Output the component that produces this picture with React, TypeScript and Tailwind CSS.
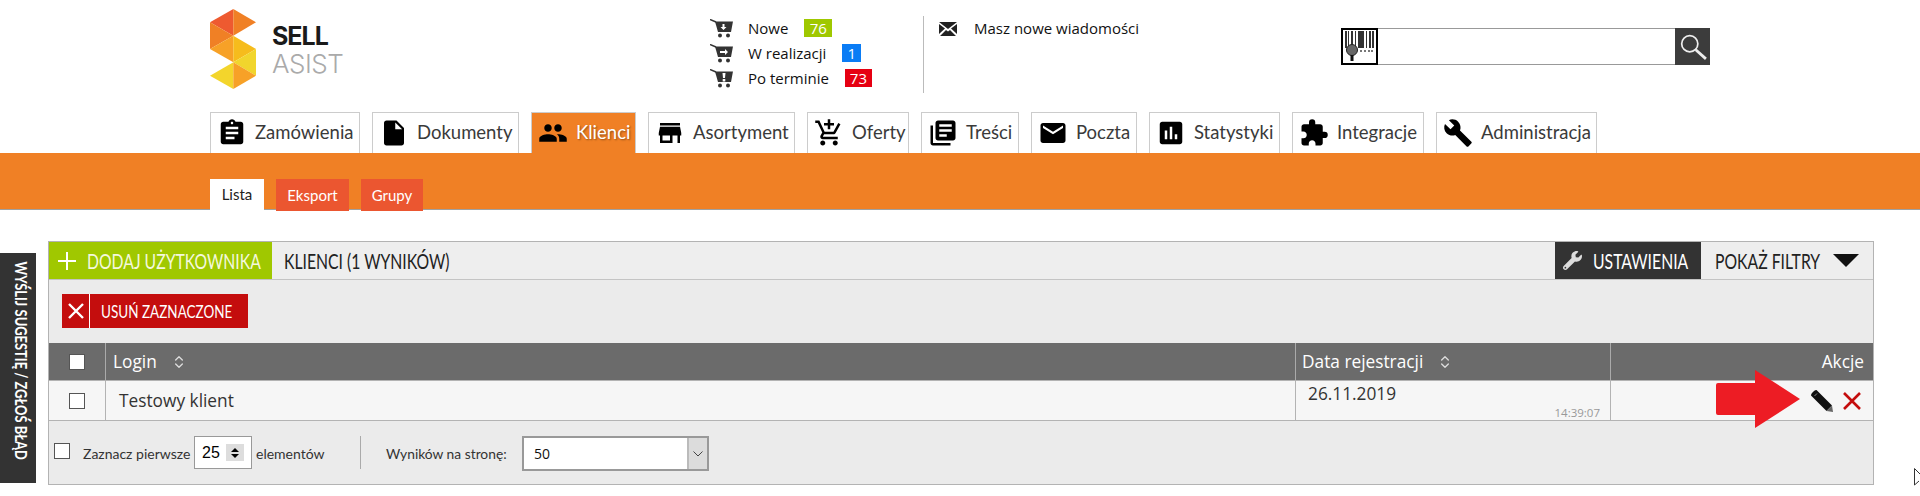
import type { ReactNode } from 'react';
import { ChevronsUpDown } from 'lucide-react';
import { FaWrench } from 'react-icons/fa';
import {
  MdAddShoppingCart,
  MdAssessment,
  MdAssignment,
  MdBuild,
  MdEmail,
  MdExtension,
  MdInsertDriveFile,
  MdLibraryBooks,
  MdPeople,
  MdStore,
} from 'react-icons/md';

const tabs = [
  { label: 'Zamówienia', icon: MdAssignment, width: 'w-[150px]' },
  { label: 'Dokumenty', icon: MdInsertDriveFile, width: 'w-[147px]' },
  { label: 'Klienci', icon: MdPeople, width: 'w-[105px]', active: true },
  { label: 'Asortyment', icon: MdStore, width: 'w-[147px]' },
  { label: 'Oferty', icon: MdAddShoppingCart, width: 'w-[102px]' },
  { label: 'Treści', icon: MdLibraryBooks, width: 'w-[98px]' },
  { label: 'Poczta', icon: MdEmail, width: 'w-[106px]' },
  { label: 'Statystyki', icon: MdAssessment, width: 'w-[131px]' },
  { label: 'Integracje', icon: MdExtension, width: 'w-[132px]' },
  { label: 'Administracja', icon: MdBuild, width: 'w-[161px]' },
];

function Logo(): JSX.Element {
  return (
    <svg width="46" height="80" viewBox="0 0 138 240" className="mt-[9px]">
      <polygon points="0,40 70,0 70,80" fill="#ee5a30" />
      <polygon points="70,0 138,40 70,80" fill="#f08025" />
      <polygon points="0,40 70,80 0,120" fill="#f08025" />
      <polygon points="0,120 70,80 70,160" fill="#f7a127" />
      <polygon points="70,80 138,120 70,160" fill="#f6bc1c" />
      <polygon points="138,120 138,200 70,160" fill="#f1d52d" />
      <polygon points="0,200 70,160 70,240" fill="#f3d52c" />
      <polygon points="70,160 138,200 70,240" fill="#f7a127" />
    </svg>
  );
}

function Cart({ children }: { children: ReactNode }): JSX.Element {
  return (
    <svg width="23" height="19" viewBox="0 0 23 19" className="shrink-0">
      <path d="M0 0.5 L6 3" stroke="#333" strokeWidth="1.5" />
      <path d="M5 2.5 H23 L21 13 H8 Z" fill="#333" />
      <circle cx="10" cy="16.5" r="2" fill="#333" />
      <circle cx="18" cy="16.5" r="2" fill="#333" />
      {children}
    </svg>
  );
}

function Checkbox(): JSX.Element {
  return <div className="h-4 w-4 border border-[#555] bg-white" />;
}

function Sort(): JSX.Element {
  return <ChevronsUpDown size={16} strokeWidth={2} className="text-[#ddd]" />;
}

// Stands in for the condensed webfont of the original
function Narrow({ className, children }: { className: string; children: ReactNode }): JSX.Element {
  return (
    <div className={`shrink-0 whitespace-nowrap ${className}`}>
      <span className="inline-block origin-left scale-x-[0.75]">{children}</span>
    </div>
  );
}

export default function App(): JSX.Element {
  return (
    <div className="relative h-[496px] w-[1920px] overflow-hidden bg-white font-['Open_Sans',sans-serif]">
      {/* header */}
      <div className="flex h-[112px] pl-[210px]">
        <div className="flex w-[500px] items-start">
          <Logo />
          <div className="ml-4 mt-[22px] flex flex-col font-['Inter',sans-serif] leading-[28px]">
            <span className="text-[25px] font-bold tracking-[-1px] text-[#1a1a1a]">SELL</span>
            <span className="text-[26px] font-light tracking-[-0.5px] text-[#aaa]">ASIST</span>
          </div>
        </div>

        <div className="w-[213px] pt-[19px] text-[15px] text-[#111]">
          <div className="flex h-[25px] items-start">
            <Cart>
              <path d="M12.5 5 h2 v3 h2 l-3 3 l-3 -3 h2 Z" fill="#fff" />
            </Cart>
            <span className="ml-[15px] leading-[18px]">Nowe</span>
            <span className="ml-4 flex h-[18px] w-[28px] items-center justify-center bg-[#9fc800] text-white">76</span>
          </div>
          <div className="flex h-[25px] items-start">
            <Cart>
              <path d="M10 7 h5 v-2 l3 3 l-3 3 v-2 h-5 Z" fill="#fff" />
            </Cart>
            <span className="ml-[15px] leading-[18px]">W realizacji</span>
            <span className="ml-4 flex h-[18px] w-[19px] items-center justify-center bg-[#0a7cf5] text-white">1</span>
          </div>
          <div className="flex h-[25px] items-start">
            <Cart>
              <path d="M12.5 4 h3 l-0.5 5 h-2 Z M12.7 10 h2.6 v2.4 h-2.6 Z" fill="#fff" />
            </Cart>
            <span className="ml-[15px] leading-[18px]">Po terminie</span>
            <span className="ml-4 flex h-[18px] w-[27px] items-center justify-center bg-[#e60012] text-white">73</span>
          </div>
        </div>

        <div className="mt-4 flex h-[77px] w-[418px] items-start border-l border-[#bbb] pl-[15px] text-[15px] text-[#111]">
          <svg width="18" height="14" viewBox="0 0 18 14" className="mt-[6px]">
            <path d="M0 0 H18 L9 7 Z M0 2 V12 L6 6.5 Z M18 2 V12 L12 6.5 Z M1 14 L7 8 L9 9.5 L11 8 L17 14 Z" fill="#222" />
          </svg>
          <span className="ml-[17px] mt-[3px] leading-[18px]">Masz nowe wiadomości</span>
        </div>

        <div className="mt-[28px] flex h-[37px] w-[369px]">
          <div className="flex h-[37px] w-[37px] border-2 border-black bg-white p-[1px]">
            <svg width="31" height="31" viewBox="0 0 31 31">
              <path d="M1 0h2v22H1z M4 0h1v22H4z M7 0h2v22H7z M11 0h1v22h-1z M14 0h6v17h-6z M22 0h1v22h-1z M25 0h2v22h-2z M28 0h2v22h-2z" fill="#333" />
              <rect x="0" y="17" width="31" height="6" fill="#fff" />
              <circle cx="8" cy="19" r="5.5" fill="#666" stroke="#222" />
              <rect x="6.5" y="24" width="3" height="6" fill="#111" />
              <path d="M16 19h2v2h-2z M20 19h2v2h-2z M24 19h2v2h-2z M27 19h2v2h-2z" fill="#777" />
            </svg>
          </div>
          <div className="h-[37px] w-[298px] border-y border-[#999] bg-white" />
          <div className="flex h-[37px] w-[35px] items-center justify-center bg-[#3c3c3c]">
            <svg width="28" height="28" viewBox="0 0 26 26" fill="none" stroke="#eee">
              <circle cx="10" cy="10" r="7.5" strokeWidth="1.6" />
              <path d="M15.5 15.5 L25 24" strokeWidth="2.6" />
            </svg>
          </div>
        </div>
      </div>

      {/* main tabs */}
      <div className="flex h-[41px] gap-3 pl-[210px] font-['Lato',sans-serif] text-[18.5px]">
        {tabs.map(({ label, icon: Icon, width, active }) => (
          <div
            key={label}
            className={`flex items-center gap-2 border border-b-0 border-[#ccc] pl-[6px] ${width} ${
              active ? 'bg-[#f08025] text-white [text-shadow:1px_1px_2px_rgba(0,0,0,0.4)]' : 'bg-white text-[#3a3a3a]'
            }`}
          >
            <Icon size={30} className="shrink-0 text-black" />
            <span className="whitespace-nowrap">{label}</span>
          </div>
        ))}
      </div>

      {/* orange bar with sub tabs */}
      <div className="flex h-[57px] gap-3 border-b border-[#a0a0a0] bg-[#f08025] pl-[210px] pt-[26px] font-['Lato',sans-serif] text-[15px]">
        <div className="flex h-[31px] w-[54px] items-center justify-center bg-white text-[#222]">Lista</div>
        <div className="flex h-[32px] w-[73px] items-center justify-center bg-[#eb5630] text-white">Eksport</div>
        <div className="flex h-[32px] w-[62px] items-center justify-center bg-[#eb5630] text-white">Grupy</div>
      </div>

      {/* panel */}
      <div className="ml-[48px] mt-[31px] w-[1826px] border border-[#b3b3b3] bg-[#ebebeb]">
        <div className="flex h-[38px] items-stretch border-b border-[#c4c4c4] bg-[#eee] font-['Lato',sans-serif] text-[21px] uppercase">
          <div className="flex w-[223px] shrink-0 items-center bg-[#a0c800] pl-[9px] text-[#f4f8dc]">
            <svg width="18" height="18" viewBox="0 0 18 18" className="mr-[11px] shrink-0">
              <path d="M8 0h2v8h8v2h-8v8H8v-8H0V8h8z" fill="#fff" />
            </svg>
            <Narrow className="w-[173px]">Dodaj użytkownika</Narrow>
          </div>
          <div className="ml-3 flex items-center text-[#222]">
            <Narrow className="w-[163px]">Klienci (1 wyników)</Narrow>
          </div>
          <div className="ml-auto flex w-[146px] shrink-0 items-center bg-[#333] pl-2 text-white">
            <FaWrench size={19} className="mr-[11px] shrink-0 text-[#ddd]" />
            <Narrow className="w-[96px]">Ustawienia</Narrow>
          </div>
          <div className="flex w-[172px] shrink-0 items-center pl-[14px] text-[#222]">
            <Narrow className="w-[108px]">Pokaż filtry</Narrow>
            <svg width="26" height="13" viewBox="0 0 26 13" className="ml-[10px] shrink-0">
              <path d="M0 0H26L13 13Z" fill="#111" />
            </svg>
          </div>
        </div>

        <div className="flex h-[63px] items-start pl-[13px] pt-[14px]">
          <div className="flex h-[34px] w-[186px] items-stretch bg-[#c40d0d] font-['Lato',sans-serif] text-[18px] text-white">
            <div className="flex w-[28px] items-center justify-center border-r border-white">
              <svg width="16" height="16" viewBox="0 0 16 16" stroke="#fff" strokeWidth="2.4">
                <path d="M1 1L15 15M15 1L1 15" />
              </svg>
            </div>
            <div className="flex items-center pl-[11px]">
              <Narrow className="w-[134px]">USUŃ ZAZNACZONE</Narrow>
            </div>
          </div>
        </div>

        <div className="flex h-[38px] border-b border-[#b3b3b3] bg-[#6b6b6b] text-[17.3px] text-white">
          <div className="flex w-[57px] items-center justify-center border-r border-[#aaa]">
            <Checkbox />
          </div>
          <div className="flex w-[1189px] items-center gap-[14px] pl-[7px]">
            Login <Sort />
          </div>
          <div className="flex w-[316px] items-center gap-[14px] border-x border-[#aaa] pl-[6px]">
            Data rejestracji <Sort />
          </div>
          <div className="flex flex-1 items-center justify-end pr-[9px]">Akcje</div>
        </div>

        <div className="flex h-[40px] border-b border-[#b3b3b3] bg-[#f6f6f6] text-[17.3px] text-[#333]">
          <div className="flex w-[57px] items-center justify-center border-r border-[#b3b3b3]">
            <Checkbox />
          </div>
          <div className="flex w-[1189px] items-center pl-[13px]">Testowy klient</div>
          <div className="relative w-[316px] border-x border-[#b3b3b3] pl-3 pt-[2px] leading-[22px]">
            26.11.2019
            <span className="absolute bottom-0 right-[10px] text-[11.5px] leading-[14px] text-[#999]">14:39:07</span>
          </div>
          <div className="flex flex-1 items-center justify-end gap-[10px] pr-[12px]">
            <svg width="22" height="22" viewBox="0 0 22 22">
              <path d="M5.5 0 L21 15.5 L15.5 21 L0 5.5 Q0 4 1 3 L3 1 Q4 0 5.5 0 Z" fill="#111" />
              <path d="M21 15.5 L22 22 L15.5 21 Z" fill="#666" />
              <path d="M3.5 6 L6 3.5" stroke="#888" strokeWidth="1" />
            </svg>
            <svg width="18" height="18" viewBox="0 0 18 18" stroke="#c40d0d" strokeWidth="2.6">
              <path d="M1 1L17 17M17 1L1 17" />
            </svg>
          </div>
        </div>

        <div className="flex h-[63px] items-start pl-[5px] pt-[15px] font-['Lato',sans-serif] text-[14px] text-[#333]">
          <div className="mt-[7px]">
            <Checkbox />
          </div>
          <span className="ml-[13px] mt-[9px] w-[107px] whitespace-nowrap leading-[18px]">Zaznacz pierwsze</span>
          <div className="ml-1 flex h-[33px] w-[58px] items-center border border-[#999] bg-white pl-[7px] font-['Liberation_Sans',sans-serif] text-[16px] text-black">
            25
            <div className="ml-[6px] flex h-[17px] w-[18px] flex-col items-center justify-center gap-[2px] bg-[#ddd]">
              <span className="h-0 w-0 border-x-[4px] border-b-[4px] border-x-transparent border-b-black" />
              <span className="h-0 w-0 border-x-[4px] border-t-[4px] border-x-transparent border-t-black" />
            </div>
          </div>
          <span className="ml-1 mt-[9px] w-[69px] whitespace-nowrap leading-[18px]">elementów</span>
          <div className="ml-[35px] h-[33px] border-l border-[#aaa]" />
          <span className="ml-[25px] mt-[9px] w-[119px] whitespace-nowrap text-[13.8px] leading-[18px]">Wyników na stronę:</span>
          <div className="ml-[17px] flex h-[35px] w-[187px] border-2 border-[#999] bg-white font-['Open_Sans',sans-serif] text-[14px] text-[#111]">
            <div className="flex flex-1 items-center pl-[10px]">50</div>
            <div className="flex w-[20px] items-center justify-center border-l-2 border-[#bbb] bg-[#dcdcdc]">
              <svg width="10" height="6" viewBox="0 0 10 6" fill="none" stroke="#444">
                <path d="M0.5 0.5L5 5L9.5 0.5" />
              </svg>
            </div>
          </div>
        </div>
      </div>

      {/* floating feedback tab */}
      <div className="absolute left-0 top-[253px] flex h-[230px] w-[36px] items-center justify-center bg-[#333] pb-[14px] pl-[7px]">
        <span className="rotate-90 scale-x-[0.76] whitespace-nowrap font-['Lato',sans-serif] text-[17px] font-bold uppercase text-white">
          Wyślij sugestię / zgłoś błąd
        </span>
      </div>

      {/* annotation arrow */}
      <svg width="84" height="60" viewBox="0 0 84 60" className="absolute left-[1716px] top-[369px]">
        <path d="M2 14 H39 V1 L84 30 L39 59 V46 H2 Q0 46 0 44 V16 Q0 14 2 14 Z" fill="#ed1c24" />
      </svg>

      {/* mouse cursor */}
      <svg width="6" height="18" viewBox="0 0 6 18" fill="none" stroke="#333" className="absolute left-[1914px] top-[468px]">
        <path d="M0.5 0.5V17L5 13M0.5 0.5L6 6" />
      </svg>
    </div>
  );
}
